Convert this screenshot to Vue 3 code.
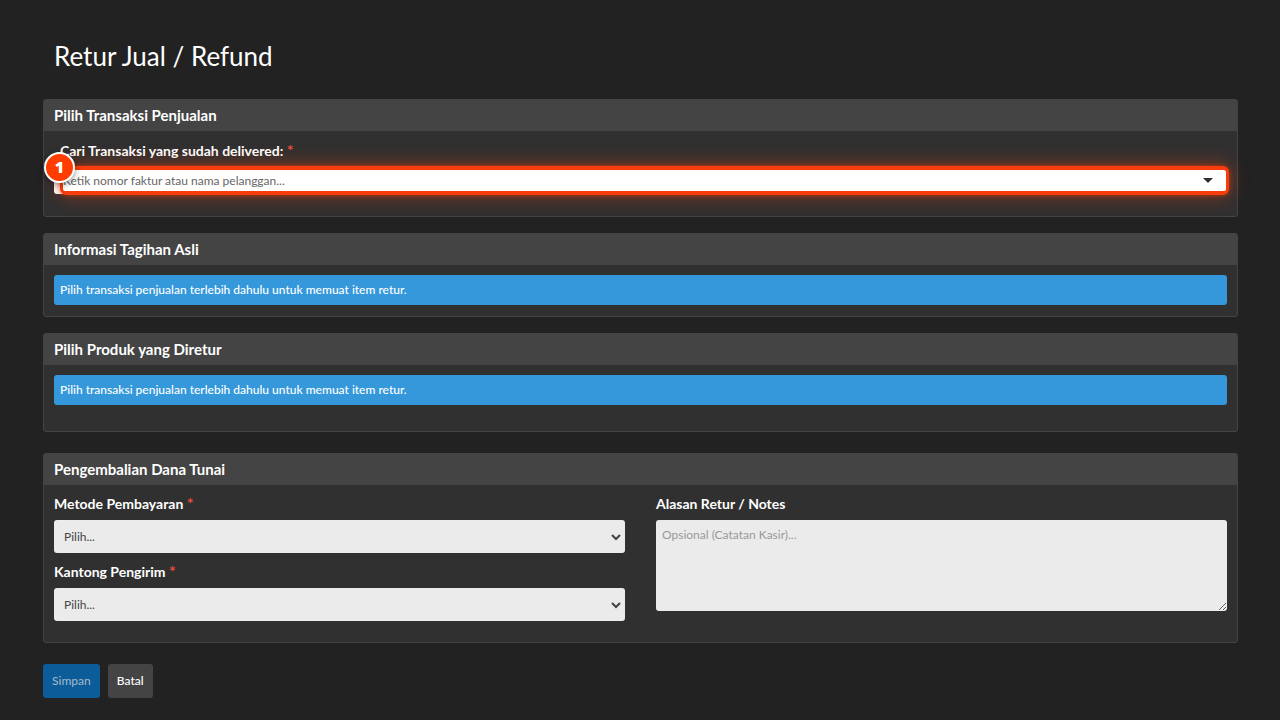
<script setup>
import { ref } from 'vue'

const invoice = ref('')
const method = ref('')
const pocket = ref('')
const notes = ref('')
const hint = 'Pilih transaksi penjualan terlebih dahulu untuk memuat item retur.'
</script>

<template>
  <main class="page">
    <h1>Retur Jual / Refund</h1>

    <section class="panel">
      <h2>Pilih Transaksi Penjualan</h2>
      <div class="body search">
        <label class="inset" for="invoice">Cari Transaksi yang sudah delivered: <span class="req">*</span></label>
        <div class="combo">
          <input id="invoice" v-model="invoice" type="text" placeholder="Ketik nomor faktur atau nama pelanggan..." />
          <svg class="caret" viewBox="0 0 10 5" aria-hidden="true"><path d="M0 0h10L5 5z" /></svg>
          <div class="ring"></div>
          <span class="badge">1</span>
        </div>
      </div>
    </section>

    <section class="panel">
      <h2>Informasi Tagihan Asli</h2>
      <div class="body">
        <p class="alert">{{ hint }}</p>
      </div>
    </section>

    <section class="panel products">
      <h2>Pilih Produk yang Diretur</h2>
      <div class="body roomy">
        <p class="alert">{{ hint }}</p>
      </div>
    </section>

    <section class="panel refund">
      <h2>Pengembalian Dana Tunai</h2>
      <div class="body columns">
        <div class="column">
          <div class="field">
            <label for="method">Metode Pembayaran <span class="req">*</span></label>
            <div class="select">
              <select id="method" v-model="method"><option value="">Pilih...</option></select>
              <svg viewBox="0 0 10 7" aria-hidden="true"><path d="M1 1l4 4 4-4" /></svg>
            </div>
          </div>
          <div class="field">
            <label for="pocket">Kantong Pengirim <span class="req">*</span></label>
            <div class="select">
              <select id="pocket" v-model="pocket"><option value="">Pilih...</option></select>
              <svg viewBox="0 0 10 7" aria-hidden="true"><path d="M1 1l4 4 4-4" /></svg>
            </div>
          </div>
        </div>
        <div class="column">
          <div class="field">
            <label for="notes">Alasan Retur / Notes</label>
            <textarea id="notes" v-model="notes" placeholder="Opsional (Catatan Kasir)..."></textarea>
          </div>
        </div>
      </div>
    </section>

    <div class="actions">
      <button class="primary" type="button" disabled>Simpan</button>
      <button type="button">Batal</button>
    </div>
  </main>
</template>

<style>
body {
  background: #222;
}
</style>

<style scoped>
.page,
.page * {
  box-sizing: border-box;
}
.page {
  padding: 39px 42px 22px 43px;
  color: #fff;
  font-family: Lato, "Liberation Sans", sans-serif;
  font-size: 12px;
  font-weight: 500;
  line-height: 20px;
}
h1 {
  margin: 0 0 26px;
  padding-left: 11px;
  font-size: 26px;
  font-weight: 400;
  line-height: 34px;
}
.panel {
  margin-bottom: 16px;
  border: 1px solid #444;
  border-radius: 3px;
  background: #303030;
}
.products {
  margin-bottom: 21px;
}
.refund {
  margin-bottom: 21px;
}
h2 {
  margin: 0;
  padding: 5px 10px 6px;
  background: #444;
  font-size: 15px;
  font-weight: 700;
  line-height: 20px;
}
.body {
  padding: 10px 10px 11px;
}
.search {
  padding-top: 10px;
  padding-bottom: 22px;
}
.roomy {
  padding-bottom: 26px;
}
label {
  display: block;
  font-size: 14px;
  font-weight: 700;
  line-height: 20px;
}
.inset {
  padding-left: 6px;
}
.req {
  color: #e74c3c;
  font-size: 16px;
  line-height: 1;
}
.combo {
  position: relative;
  margin-top: 6px;
}
.combo input {
  display: block;
  width: 100%;
  height: 27px;
  padding: 0 28px 1px 9px;
  border: 0;
  border-radius: 3px;
  background: #fff;
  color: #444;
  font: inherit;
  font-weight: 400;
}
.combo input::placeholder {
  color: #666;
  opacity: 1;
}
.caret {
  position: absolute;
  top: 11px;
  right: 14px;
  width: 10px;
  height: 5px;
  fill: #303030;
}
.ring {
  position: absolute;
  inset: -1px -2px -1px 6px;
  border: 4px solid #f83c0c;
  border-right-width: 3px;
  border-left-width: 3px;
  border-radius: 6px;
  box-shadow: 0 0 4px rgba(255, 61, 0, 0.6), 0 0 20px rgba(255, 61, 0, 0.45);
  pointer-events: none;
}
.badge {
  position: absolute;
  top: -15px;
  left: -10px;
  width: 31px;
  height: 31px;
  border: 2px solid #fff;
  border-radius: 50%;
  background: #ff3d00;
  box-shadow: 0 2px 6px rgba(0, 0, 0, 0.4);
  font-family: "Noto Sans", sans-serif;
  font-size: 16px;
  font-weight: 900;
  line-height: 27px;
  text-align: center;
}
.alert {
  margin: 0;
  padding: 5px 6px;
  border-radius: 3px;
  background: #3498db;
}
.columns {
  display: grid;
  grid-template-columns: 1fr 1fr;
  gap: 31px;
  padding-top: 9px;
  padding-bottom: 21px;
}
.column {
  display: flex;
  flex-direction: column;
  gap: 9px;
}
.field {
  display: flex;
  flex-direction: column;
  gap: 6px;
}
.select {
  position: relative;
}
select,
textarea {
  display: block;
  width: 100%;
  border: 0;
  border-radius: 3px;
  background: #ebebeb;
  color: #444;
  font: inherit;
  font-weight: 400;
}
select {
  height: 33px;
  padding: 0 24px 0 10px;
  appearance: none;
}
.select svg {
  position: absolute;
  top: 14px;
  right: 4px;
  width: 10px;
  height: 7px;
  fill: none;
  stroke: #444;
  stroke-width: 2;
  pointer-events: none;
}
textarea {
  height: 91px;
  padding: 5px 6px;
  resize: vertical;
}
textarea::placeholder {
  color: #999;
  opacity: 1;
}
.actions {
  display: flex;
  gap: 8px;
}
button {
  height: 34px;
  padding: 0 9px 1px;
  border: 0;
  border-radius: 3px;
  background: #444;
  color: #fff;
  font: inherit;
}
.primary {
  background: #0c5c99;
  color: #9bb4c8;
}
</style>
